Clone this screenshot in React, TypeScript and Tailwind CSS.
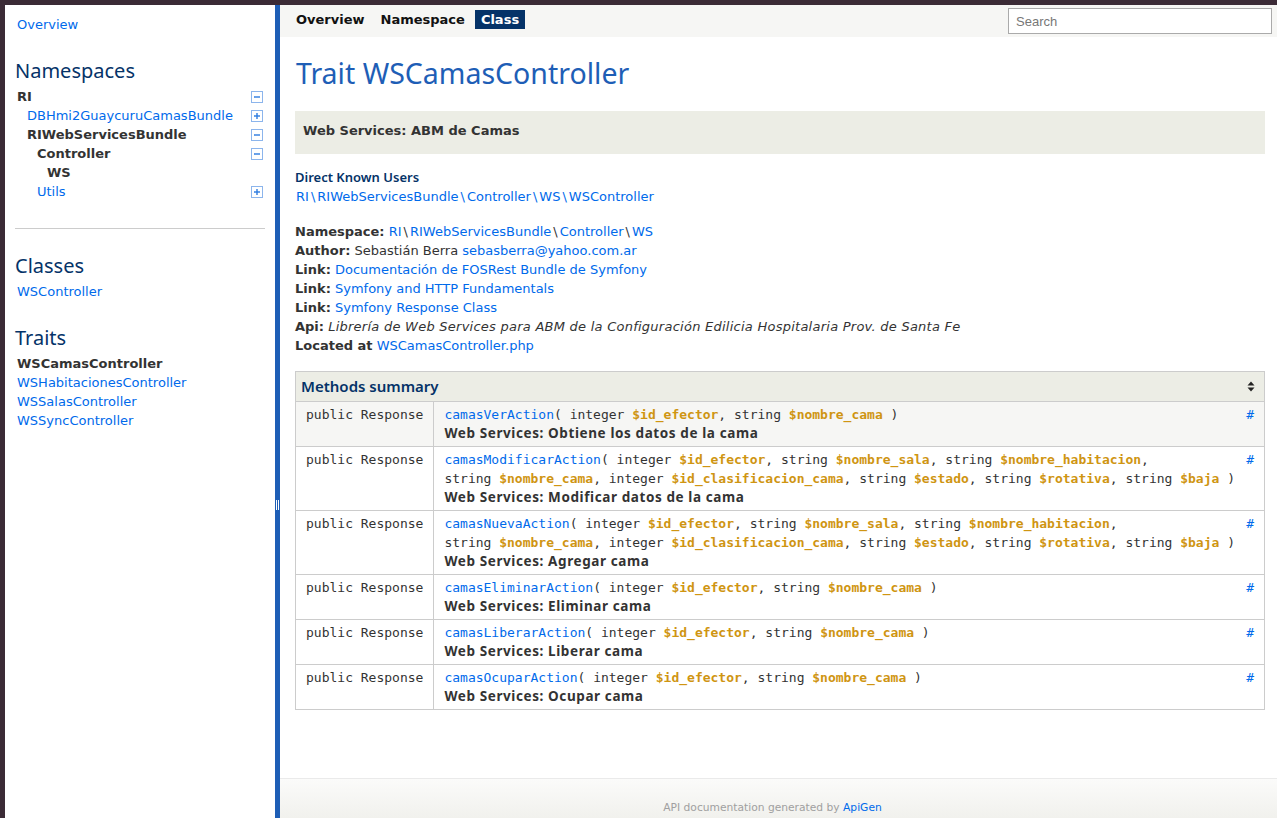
import { Fragment } from "react";

const tree = [
  { label: "RI", indent: "pl-[2px]", bold: true, toggle: "minus" },
  { label: "DBHmi2GuaycuruCamasBundle", indent: "pl-[12px]", bold: false, toggle: "plus" },
  { label: "RIWebServicesBundle", indent: "pl-[12px]", bold: true, toggle: "minus" },
  { label: "Controller", indent: "pl-[22px]", bold: true, toggle: "minus" },
  { label: "WS", indent: "pl-[32px]", bold: true, toggle: null },
  { label: "Utils", indent: "pl-[22px]", bold: false, toggle: "plus" },
];

const traits = [
  { label: "WSCamasController", active: true },
  { label: "WSHabitacionesController", active: false },
  { label: "WSSalasController", active: false },
  { label: "WSSyncController", active: false },
];

const methods = [
  {
    name: "camasVerAction",
    params: [
      ["integer", "$id_efector"],
      ["string", "$nombre_cama"],
    ],
    desc: "Web Services: Obtiene los datos de la cama",
  },
  {
    name: "camasModificarAction",
    params: [
      ["integer", "$id_efector"],
      ["string", "$nombre_sala"],
      ["string", "$nombre_habitacion"],
      ["string", "$nombre_cama"],
      ["integer", "$id_clasificacion_cama"],
      ["string", "$estado"],
      ["string", "$rotativa"],
      ["string", "$baja"],
    ],
    desc: "Web Services: Modificar datos de la cama",
  },
  {
    name: "camasNuevaAction",
    params: [
      ["integer", "$id_efector"],
      ["string", "$nombre_sala"],
      ["string", "$nombre_habitacion"],
      ["string", "$nombre_cama"],
      ["integer", "$id_clasificacion_cama"],
      ["string", "$estado"],
      ["string", "$rotativa"],
      ["string", "$baja"],
    ],
    desc: "Web Services: Agregar cama",
  },
  {
    name: "camasEliminarAction",
    params: [
      ["integer", "$id_efector"],
      ["string", "$nombre_cama"],
    ],
    desc: "Web Services: Eliminar cama",
  },
  {
    name: "camasLiberarAction",
    params: [
      ["integer", "$id_efector"],
      ["string", "$nombre_cama"],
    ],
    desc: "Web Services: Liberar cama",
  },
  {
    name: "camasOcuparAction",
    params: [
      ["integer", "$id_efector"],
      ["string", "$nombre_cama"],
    ],
    desc: "Web Services: Ocupar cama",
  },
];

function Toggle({ plus }: { plus: boolean }) {
  return (
    <svg width="12" height="12" viewBox="0 0 12 12" className="mr-[2px]">
      <rect x="0.5" y="0.5" width="11" height="11" fill="#fff" stroke="#8cb5ec" />
      <path d="M3 6h6" stroke="#2d7be0" strokeWidth="1.4" />
      {plus && <path d="M6 3v6" stroke="#2d7be0" strokeWidth="1.4" />}
    </svg>
  );
}

function SideHeading({ children, top }: { children: string; top: string }) {
  return (
    <h3
      className={`${top} mb-[3px] font-['Noto_Sans',sans-serif] text-[20px] leading-[26px] text-[#053368]`}
    >
      {children}
    </h3>
  );
}

// backslash as drawn by the docs font is wider than DejaVu's
function Bs() {
  return <span className="px-[2px]">\</span>;
}

export default function App() {
  return (
    <div className="h-screen flex flex-col bg-[#3b2b36] font-['DejaVu_Sans',sans-serif] text-[13px] leading-[19px] text-[#333]">
      <div className="h-[5px] shrink-0" />
      <div className="flex flex-1 min-h-0 pl-[5px]">
        {/* sidebar */}
        <aside className="w-[270px] shrink-0 bg-white px-[10px] pt-[10px]">
          <a className="block pl-[2px] text-[#006aeb]">Overview</a>

          <SideHeading top="mt-[24px]">Namespaces</SideHeading>
          {tree.map((n) => (
            <div key={n.label} className="flex items-center justify-between h-[19px]">
              <span
                className={`${n.indent} ${n.bold ? "font-bold text-[#333]" : "text-[#006aeb]"}`}
              >
                {n.label}
              </span>
              {n.toggle && <Toggle plus={n.toggle === "plus"} />}
            </div>
          ))}

          <hr className="mt-[27px] border-0 border-t border-[#cccccc]" />

          <SideHeading top="mt-[24px]">Classes</SideHeading>
          <a className="block pl-[2px] text-[#006aeb]">WSController</a>

          <SideHeading top="mt-[24px]">Traits</SideHeading>
          {traits.map((t) => (
            <div
              key={t.label}
              className={`pl-[2px] ${t.active ? "font-bold text-[#333]" : "text-[#006aeb]"}`}
            >
              {t.label}
            </div>
          ))}
        </aside>

        {/* splitter */}
        <div className="w-[5px] shrink-0 bg-[#1e5eb6] flex flex-col items-center">
          <div className="mt-[495px] flex gap-[1px]">
            <div className="w-[1px] h-[10px] bg-white" />
            <div className="w-[1px] h-[10px] bg-white" />
          </div>
        </div>

        {/* main */}
        <main className="flex-1 min-w-0 bg-white flex flex-col">
          <div className="h-[32px] shrink-0 bg-[#f6f6f4] flex items-start justify-between pl-[10px] pr-[5px]">
            <ul className="flex gap-[4px] mt-[5px] font-bold">
              <li className="px-[6px] text-[#111]">Overview</li>
              <li className="px-[6px] text-[#111]">Namespace</li>
              <li className="px-[6px] bg-[#053368] text-white">Class</li>
            </ul>
            <input
              placeholder="Search"
              className="mt-[3px] w-[264px] h-[26px] border border-[#aaaaaa] bg-white px-[7px] font-['Liberation_Sans',sans-serif] text-[13px] placeholder:text-[#777] outline-none"
            />
          </div>

          <div className="flex-1 pl-[15px] pr-[12px]">
            <h1 className="mt-[18px] pl-[1px] font-['Noto_Sans',sans-serif] text-[28.5px] leading-[36px] text-[#1e5eb6]">
              Trait WSCamasController
            </h1>

            <div className="mt-[20px] bg-[#ecede5] pl-[8px] pt-[10px] pb-[14px] font-bold">
              Web Services: ABM de Camas
            </div>

            <h4 className="mt-[14px] font-['Noto_Sans',sans-serif] font-semibold text-[13px] text-[#053368]">
              Direct Known Users
            </h4>
            <a className="block pl-[1px] text-[#006aeb]">
              RI<Bs />RIWebServicesBundle<Bs />Controller<Bs />WS<Bs />WSController
            </a>

            <div className="mt-[16px]">
              <div>
                <b>Namespace:</b>{" "}
                <span className="text-[#006aeb]">RI</span>
                <Bs />
                <span className="text-[#006aeb]">RIWebServicesBundle</span>
                <Bs />
                <span className="text-[#006aeb]">Controller</span>
                <Bs />
                <span className="text-[#006aeb]">WS</span>
              </div>
              <div>
                <b>Author:</b> Sebastián Berra{" "}
                <a className="text-[#006aeb]">sebasberra@yahoo.com.ar</a>
              </div>
              <div>
                <b>Link:</b>{" "}
                <a className="text-[#006aeb]">Documentación de FOSRest Bundle de Symfony</a>
              </div>
              <div>
                <b>Link:</b> <a className="text-[#006aeb]">Symfony and HTTP Fundamentals</a>
              </div>
              <div>
                <b>Link:</b> <a className="text-[#006aeb]">Symfony Response Class</a>
              </div>
              <div>
                <b>Api:</b>{" "}
                <i className="tracking-[0.25px]">
                  Librería de Web Services para ABM de la Configuración Edilicia Hospitalaria
                  Prov. de Santa Fe
                </i>
              </div>
              <div>
                <b>Located at</b> <a className="text-[#006aeb]">WSCamasController.php</a>
              </div>
            </div>

            <table className="mt-[16px] w-full border-collapse border border-[#cccccc]">
              <thead>
                <tr>
                  <th
                    colSpan={2}
                    className="bg-[#ecede5] border border-[#cccccc] py-[3px] pl-[5px] pr-[9px] text-left"
                  >
                    <div className="flex items-center justify-between h-[23px]">
                      <span className="font-['Noto_Sans',sans-serif] font-semibold text-[15px] text-[#053368]">
                        Methods summary
                      </span>
                      <svg width="8" height="11" viewBox="0 0 8 11">
                        <path d="M4 0.5L7.5 4.5H0.5Z M4 10.5L0.5 6.5H7.5Z" fill="#222" />
                      </svg>
                    </div>
                  </th>
                </tr>
              </thead>
              <tbody>
                {methods.map((m, idx) => (
                  <tr key={m.name} className={idx === 0 ? "bg-[#f6f6f4]" : ""}>
                    <td className="w-[137px] align-top whitespace-nowrap border border-[#cccccc] py-[3px] px-[10px] font-['DejaVu_Sans_Mono',monospace] text-[13px]">
                      public Response
                    </td>
                    <td className="align-top border border-[#cccccc] py-[3px] px-[10px]">
                      <div className="flex justify-between gap-[6px]">
                        <div className="min-w-0">
                          <code className="font-['DejaVu_Sans_Mono',monospace] text-[13px]">
                            <a className="text-[#006aeb]">{m.name}</a>(
                            {m.params.map(([t, v], i) => (
                              <Fragment key={v}>
                                {" "}
                                <span className="whitespace-nowrap">
                                  {t}{" "}
                                  <var className="not-italic font-bold text-[#cf9512]">{v}</var>
                                  {i < m.params.length - 1 ? "," : " )"}
                                </span>
                              </Fragment>
                            ))}
                          </code>
                          <div className="font-['Noto_Sans',sans-serif] font-bold text-[13.5px] tracking-[0.6px]">
                            {m.desc}
                          </div>
                        </div>
                        <a className="shrink-0 font-['DejaVu_Sans_Mono',monospace] text-[13px] text-[#006aeb]">
                          #
                        </a>
                      </div>
                    </td>
                  </tr>
                ))}
              </tbody>
            </table>
          </div>

          <footer className="h-[40px] shrink-0 border-t border-[#eaeaea] bg-gradient-to-b from-[#fbfbfa] to-[#f1f1ed] pt-[22px] pr-[12px] text-center text-[10.7px] leading-[14px] text-[#a0a0a0]">
            API documentation generated by <a className="text-[#006aeb]">ApiGen</a>
          </footer>
        </main>
      </div>
    </div>
  );
}
